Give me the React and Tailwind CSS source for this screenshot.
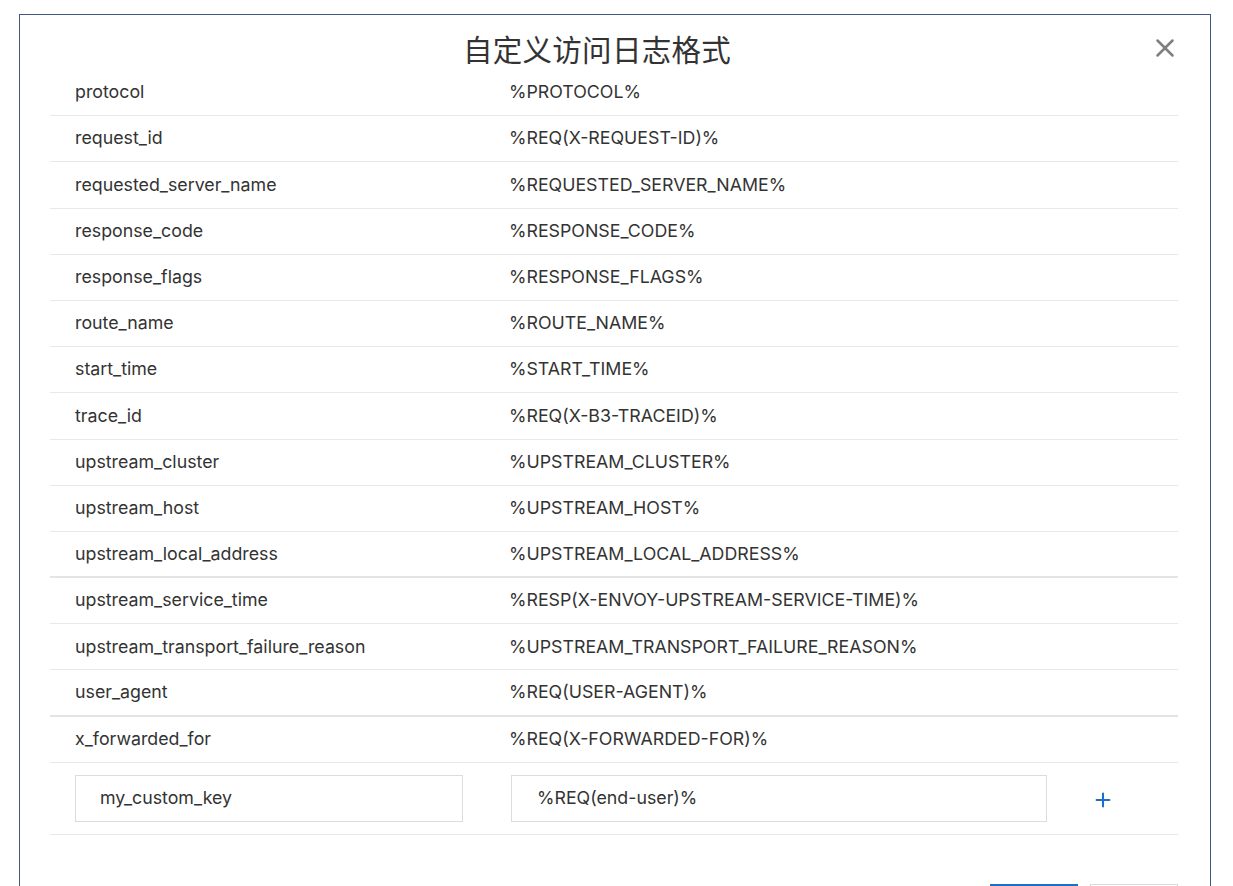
import { Plus, X } from 'lucide-react';

const ROWS = [
  ['protocol', '%PROTOCOL%'],
  ['request_id', '%REQ(X-REQUEST-ID)%'],
  ['requested_server_name', '%REQUESTED_SERVER_NAME%'],
  ['response_code', '%RESPONSE_CODE%'],
  ['response_flags', '%RESPONSE_FLAGS%'],
  ['route_name', '%ROUTE_NAME%'],
  ['start_time', '%START_TIME%'],
  ['trace_id', '%REQ(X-B3-TRACEID)%'],
  ['upstream_cluster', '%UPSTREAM_CLUSTER%'],
  ['upstream_host', '%UPSTREAM_HOST%'],
  ['upstream_local_address', '%UPSTREAM_LOCAL_ADDRESS%'],
  ['upstream_service_time', '%RESP(X-ENVOY-UPSTREAM-SERVICE-TIME)%'],
  ['upstream_transport_failure_reason', '%UPSTREAM_TRANSPORT_FAILURE_REASON%'],
  ['user_agent', '%REQ(USER-AGENT)%'],
  ['x_forwarded_for', '%REQ(X-FORWARDED-FOR)%'],
];

// rows drawn with a heavier divider in the screenshot
const THICK = ['upstream_local_address', 'user_agent'];

export default function App() {
  return (
    <div
      className="w-[1233px] h-[886px] overflow-hidden bg-white text-[#333]"
      style={{ fontFamily: 'Inter, "Noto Sans CJK SC", sans-serif' }}
    >
      <div className="ml-[19px] mt-[14px] w-[1192px] h-[900px] border border-[#3f5b82] bg-white flex flex-col">
        {/* Header */}
        <div className="relative h-[70px] shrink-0 flex items-center justify-center pr-[36px] pb-[3px]">
          <h2
            className="text-[29.5px] leading-none text-[#333] tracking-[0.3px]"
            style={{ fontFamily: '"Noto Sans CJK SC", sans-serif' }}
          >
            自定义访问日志格式
          </h2>
          <button className="absolute right-[30px] top-[18px] text-[#7f7f7f]">
            <X size={30} strokeWidth={2} />
          </button>
        </div>

        {/* Body (scrolled) */}
        <div className="flex-1 overflow-hidden px-[30px]">
          <div className="-mt-[15px] w-[1128px]">
            {ROWS.map(([key, val]) => (
              <div
                key={key}
                className={`flex items-center h-[46.2px] text-[17.8px] border-b ${
                  THICK.includes(key) ? 'border-b-2 border-[#e4e4e6]' : 'border-[#e8e8ea]'
                }`}
              >
                <div className="w-[434px] pl-[25px]">{key}</div>
                <div className="pl-[25px]">{val}</div>
              </div>
            ))}

            {/* Add row */}
            <div className="flex items-center h-[72px] border-b border-[#e8e8ea] text-[17.8px]">
              <div className="w-[436px] pl-[25px]">
                <div className="w-[388px] h-[47px] border border-[#dcdcde] flex items-center pl-[24px]">
                  my_custom_key
                </div>
              </div>
              <div className="pl-[25px]">
                <div className="w-[536px] h-[47px] border border-[#dcdcde] flex items-center pl-[25px]">
                  %REQ(end-user)%
                </div>
              </div>
              <button className="ml-[45px] mt-[4px] text-[#1b6fc9]">
                <Plus size={22} strokeWidth={2.2} />
              </button>
            </div>

            {/* Footer */}
            <div className="flex justify-end gap-[12px] mt-[49px]">
              <button className="w-[88px] h-[34px] bg-[#1b6fc9] text-white text-[14px]">确定</button>
              <button className="w-[88px] h-[34px] border border-[#d9d9d9] text-[14px]">取消</button>
            </div>
          </div>
        </div>
      </div>
    </div>
  );
}
